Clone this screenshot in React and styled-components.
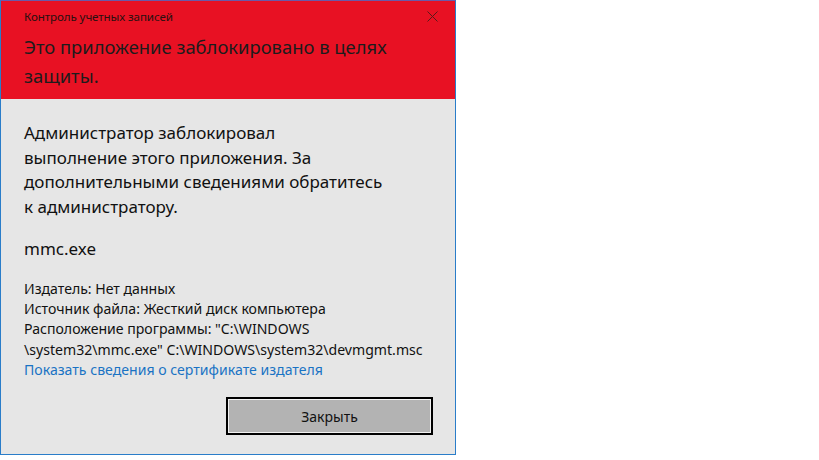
import React from "react";
import styled, { createGlobalStyle } from "styled-components";

const Global = createGlobalStyle`
  html, body { margin: 0; padding: 0; background: #ffffff; }
  body { font-family: "Noto Sans", "Open Sans", sans-serif; }
`;

const Window = styled.div`
  box-sizing: border-box;
  width: 456px;
  height: 455px;
  border: 1px solid #2a7dc9;
  border-top-color: #6b5aa8;
  display: flex;
  flex-direction: column;
  background: #e6e6e6;
`;

const Header = styled.div`
  background: #e81123;
  height: 98px;
  box-sizing: border-box;
  padding: 0 0 0 23px;
  display: flex;
  flex-direction: column;
  color: #1a1a1a;
`;

const TitleRow = styled.div`
  display: flex;
  align-items: center;
  justify-content: space-between;
  height: 32px;
  margin-top: -1px;
`;

const Caption = styled.span`
  font-size: 11.6px;
  color: #2a1010;
  letter-spacing: -0.1px;
`;

const CloseBtn = styled.div`
  width: 46px;
  height: 32px;
  display: flex;
  align-items: center;
  justify-content: center;
`;

const Heading = styled.div`
  font-size: 18.4px;
  line-height: 29px;
  color: #1c1c1c;
  white-space: nowrap;
`;

const Body = styled.div`
  flex: 1;
  display: flex;
  flex-direction: column;
  padding: 22px 23px 0 23px;
  color: #111;
`;

const Message = styled.div`
  font-size: 17px;
  line-height: 24.5px;
  white-space: nowrap;
`;

const AppName = styled.div`
  font-size: 17px;
  line-height: 24px;
  margin-top: 18px;
`;

const Details = styled.div`
  margin-top: 18px;
  font-size: 14.1px;
  line-height: 20.2px;
  white-space: nowrap;
`;

const Link = styled.a`
  color: #1a73c4;
  text-decoration: none;
  display: block;
`;

const Footer = styled.div`
  display: flex;
  justify-content: flex-end;
  margin-top: 17px;
`;

const Button = styled.button`
  box-sizing: border-box;
  width: 207px;
  height: 38px;
  border: 2px solid #000;
  outline: 1px solid #f2f2f2;
  outline-offset: -3px;
  background: #b3b3b3;
  font-family: inherit;
  font-size: 14px;
  color: #111;
  margin-right: -1px;
`;

export default function App() {
  return (
    <>
      <Global />
      <Window>
        <Header>
          <TitleRow>
            <Caption>Контроль учетных записей</Caption>
            <CloseBtn>
              <svg width="11" height="11" viewBox="0 0 11 11">
                <path d="M0.5 0.5 L10.5 10.5 M10.5 0.5 L0.5 10.5" stroke="#5a1a1a" strokeWidth="1" fill="none" />
              </svg>
            </CloseBtn>
          </TitleRow>
          <Heading>
            Это приложение заблокировано в целях
            <br />
            защиты.
          </Heading>
        </Header>
        <Body>
          <Message>
            Администратор заблокировал
            <br />
            выполнение этого приложения. За
            <br />
            дополнительными сведениями обратитесь
            <br />к администратору.
          </Message>
          <AppName>mmc.exe</AppName>
          <Details>
            Издатель: Нет данных
            <br />
            Источник файла: Жесткий диск компьютера
            <br />
            Расположение программы: "C:\WINDOWS
            <br />
            \system32\mmc.exe" C:\WINDOWS\system32\devmgmt.msc
            <Link href="#">Показать сведения о сертификате издателя</Link>
          </Details>
          <Footer>
            <Button>Закрыть</Button>
          </Footer>
        </Body>
      </Window>
    </>
  );
}
